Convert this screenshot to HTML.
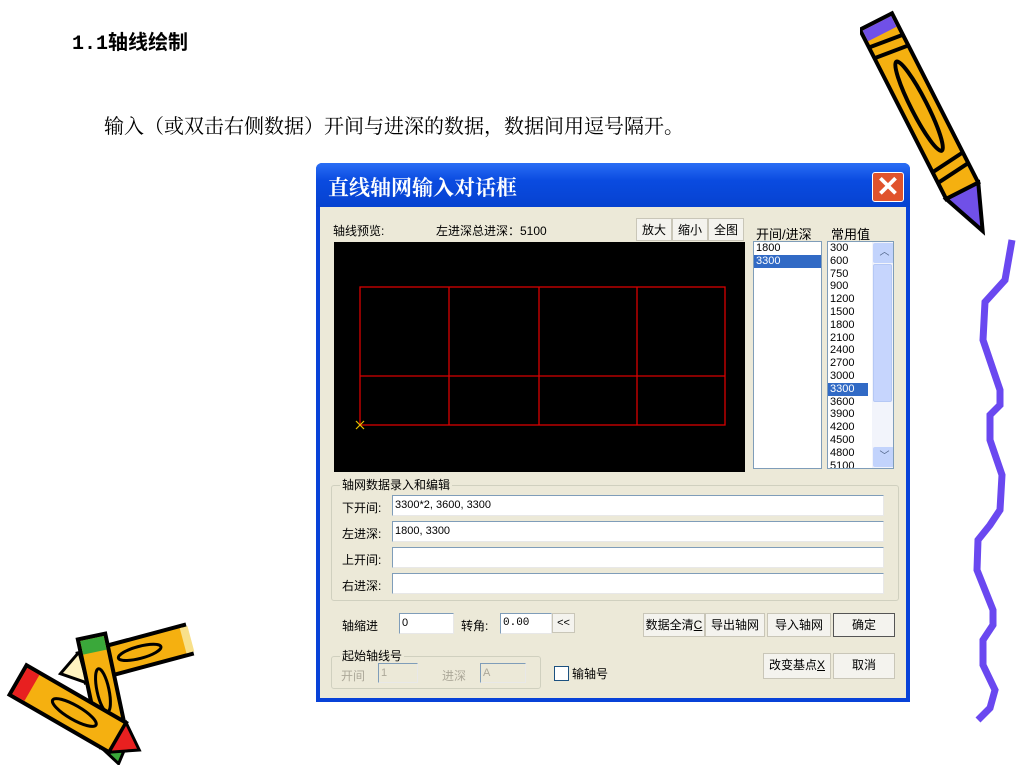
<!DOCTYPE html>
<html><head><meta charset="utf-8"><style>
body{margin:0;width:1024px;height:768px;background:#fff;position:relative;overflow:hidden;font-family:"Liberation Sans","Noto Sans CJK SC",sans-serif}
.a{position:absolute}
.t{font-size:12px;color:#000;white-space:nowrap}
.in{position:absolute;background:#fff;border-top:1px solid #7f9db9;border-left:1px solid #7f9db9;border-right:1px solid #e8e8e8;border-bottom:1px solid #e8e8e8;font-size:11px;line-height:19px;padding-left:2px;box-sizing:border-box}
.btn{position:absolute;background:#f4f3ee;border:1px solid #c9c6b8;font-size:12px;text-align:center;box-sizing:border-box;line-height:22px}
.lst div{font-size:11px;line-height:12.8px;padding-left:2px}
</style></head><body>
<div class="a" style="left:72px;top:26px;font-size:20px;font-weight:bold;font-family:'Liberation Mono','Noto Sans CJK SC',monospace">1.1<span style="font-family:'Noto Sans CJK SC',sans-serif">轴线绘制</span></div>
<div class="a" style="left:104px;top:110px;font-size:20px;font-family:'Noto Serif CJK SC',serif">输入（或双击右侧数据）开间与进深的数据，数据间用逗号隔开。</div>

<div class="a" style="left:316px;top:163px;width:594px;height:539px;background:#0842d8;border-radius:6px 6px 0 0"></div>
<div class="a" style="left:316px;top:163px;width:594px;height:44px;background:linear-gradient(#2a6ef5,#0a4be0 40%,#0642d0);border-radius:6px 6px 0 0"></div>
<div class="a" style="left:328px;top:172px;font-size:21px;color:#fff;font-weight:bold;font-family:'Noto Serif CJK SC',serif">直线轴网输入对话框</div>
<div class="a" style="left:872px;top:172px;width:32px;height:30px;background:#e0532d;border:1px solid #fff;border-radius:3px;box-sizing:border-box;color:#fff;font-size:28px;line-height:27px;text-align:center;font-weight:bold">✕</div>
<div class="a" style="left:320px;top:207px;width:586px;height:491px;background:#ece9d8"></div>

<div class="a t" style="left:333px;top:222px">轴线预览:</div>
<div class="a t" style="left:436px;top:222px">左进深总进深：5100</div>
<div class="btn" style="left:636px;top:218px;width:36px;height:23px">放大</div>
<div class="btn" style="left:672px;top:218px;width:36px;height:23px">缩小</div>
<div class="btn" style="left:708px;top:218px;width:36px;height:23px">全图</div>
<div class="a t" style="left:756px;top:224px;font-size:13px">开间/进深</div>
<div class="a t" style="left:831px;top:224px;font-size:13px">常用值</div>

<svg class="a" style="left:334px;top:242px" width="411" height="230">
<rect width="411" height="230" fill="#000"/>
<g stroke="#d80000" stroke-width="1.3" fill="none">
<rect x="26" y="45" width="365" height="138"/>
<line x1="115" y1="45" x2="115" y2="183"/><line x1="205" y1="45" x2="205" y2="183"/><line x1="303" y1="45" x2="303" y2="183"/>
<line x1="26" y1="134" x2="391" y2="134"/></g>
<g stroke="#e8c000" stroke-width="1.2"><line x1="22" y1="179" x2="30" y2="187"/><line x1="30" y1="179" x2="22" y2="187"/></g>
</svg>

<div class="a lst" style="left:753px;top:241px;width:69px;height:228px;background:#fff;border:1px solid #7f9db9;box-sizing:border-box">
<div>1800</div><div style="background:#316ac5;color:#fff">3300</div></div>
<div class="a lst" style="left:827px;top:241px;width:67px;height:228px;background:#fff;border:1px solid #7f9db9;box-sizing:border-box;overflow:hidden">
<div>300</div><div>600</div><div>750</div><div>900</div><div>1200</div><div>1500</div><div>1800</div><div>2100</div><div>2400</div><div>2700</div><div>3000</div><div style="background:#316ac5;color:#fff;width:38px">3300</div><div>3600</div><div>3900</div><div>4200</div><div>4500</div><div>4800</div><div>5100</div>
<div class="a" style="left:44px;top:0;width:21px;height:226px;background:#f2f4fb"></div>
<div class="a" style="left:45px;top:1px;width:19px;height:20px;background:#c2d3fc;border-radius:2px;color:#4d6185;font-size:10px;text-align:center;line-height:20px">︿</div>
<div class="a" style="left:45px;top:22px;width:19px;height:138px;background:#c6d5fd;border-radius:2px;border:1px solid #b5c8f5;box-sizing:border-box"></div>
<div class="a" style="left:45px;top:205px;width:19px;height:20px;background:#c2d3fc;border-radius:2px;color:#4d6185;font-size:10px;text-align:center;line-height:20px">﹀</div>
</div>

<div class="a" style="left:331px;top:485px;width:566px;height:114px;border:1px solid #d0d0bf;border-radius:3px"></div>
<div class="a t" style="left:340px;top:476px;background:#ece9d8;padding:0 2px">轴网数据录入和编辑</div>
<div class="a t" style="left:342px;top:499px">下开间:</div>
<div class="a t" style="left:342px;top:525px">左进深:</div>
<div class="a t" style="left:342px;top:551px">上开间:</div>
<div class="a t" style="left:342px;top:577px">右进深:</div>
<div class="in" style="left:392px;top:495px;width:492px;height:21px">3300*2, 3600, 3300</div>
<div class="in" style="left:392px;top:521px;width:492px;height:21px">1800, 3300</div>
<div class="in" style="left:392px;top:547px;width:492px;height:21px"></div>
<div class="in" style="left:392px;top:573px;width:492px;height:21px"></div>

<div class="a t" style="left:342px;top:617px">轴缩进</div>
<div class="in" style="left:399px;top:613px;width:55px;height:21px">0</div>
<div class="a t" style="left:461px;top:617px">转角:</div>
<div class="in" style="left:500px;top:613px;width:52px;height:21px;font-family:'Liberation Mono',monospace">0.00</div>
<div class="btn" style="left:552px;top:613px;width:23px;height:20px;line-height:18px;font-size:11px">&lt;&lt;</div>
<div class="btn" style="left:643px;top:613px;width:62px;height:24px">数据全清<u>C</u></div>
<div class="btn" style="left:705px;top:613px;width:60px;height:24px">导出轴网</div>
<div class="btn" style="left:767px;top:613px;width:64px;height:24px">导入轴网</div>
<div class="btn" style="left:833px;top:613px;width:62px;height:24px;border:1px solid #555">确定</div>
<div class="btn" style="left:763px;top:653px;width:68px;height:26px">改变基点<u>X</u></div>
<div class="btn" style="left:833px;top:653px;width:62px;height:26px">取消</div>

<div class="a" style="left:331px;top:656px;width:208px;height:31px;border:1px solid #d0d0bf;border-radius:3px"></div>
<div class="a t" style="left:340px;top:647px;background:#ece9d8;padding:0 2px">起始轴线号</div>
<div class="a t" style="left:341px;top:667px;color:#aca899">开间</div>
<div class="in" style="left:378px;top:663px;width:40px;height:20px;background:#ece9d8;color:#aca899">1</div>
<div class="a t" style="left:442px;top:667px;color:#aca899">进深</div>
<div class="in" style="left:480px;top:663px;width:46px;height:20px;background:#ece9d8;color:#aca899">A</div>
<div class="a" style="left:554px;top:666px;width:13px;height:13px;background:#fff;border:1px solid #1c5180"></div>
<div class="a t" style="left:572px;top:665px">输轴号</div>

<svg class="a" style="left:860px;top:0" width="150" height="245">
<g transform="rotate(-27 65 120)">
<rect x="48" y="10" width="36" height="190" fill="#f5b010" stroke="#000" stroke-width="4"/>
<rect x="50" y="12" width="32" height="12" fill="#7050e8"/>
<path d="M48 30 L84 34 M48 42 L84 46 M48 170 L84 166 M48 182 L84 178" stroke="#000" stroke-width="4"/>
<ellipse cx="66" cy="105" rx="8" ry="50" fill="none" stroke="#000" stroke-width="4"/>
<path d="M48 200 L66 245 L84 200 Z" fill="#7050e8" stroke="#000" stroke-width="4"/>
</g></svg>

<svg class="a" style="left:0;top:0" width="1024" height="768">
<path d="M1012 240 L1005 280 L985 302 L983 340 L1000 390 L1000 405 L990 415 L990 440 L1002 475 L1000 510 L990 525 L978 540 L977 570 L993 610 L993 625 L983 640 L983 665 L995 690 L990 708 L978 720" fill="none" stroke="#6a48f0" stroke-width="7"/>
</svg>

<svg class="a" style="left:0;top:615px" width="210" height="150">
<g transform="rotate(-15 130 40)">
<rect x="80" y="25" width="110" height="30" fill="#f5b010" stroke="#000" stroke-width="4"/>
<path d="M80 25 L58 40 L80 55" fill="#fff3c0" stroke="#000" stroke-width="3"/>
<rect x="185" y="27" width="8" height="26" fill="#f8e08a"/>
<ellipse cx="140" cy="40" rx="22" ry="6" fill="none" stroke="#000" stroke-width="3"/></g>
<g transform="rotate(-12 105 80)">
<rect x="90" y="20" width="28" height="110" fill="#f5b010" stroke="#000" stroke-width="4"/>
<rect x="92" y="22" width="24" height="14" fill="#3aa83a"/>
<path d="M90 130 L104 150 L118 130Z" fill="#3aa83a" stroke="#000" stroke-width="3"/>
<ellipse cx="104" cy="75" rx="6" ry="22" fill="none" stroke="#000" stroke-width="3"/></g>
<g transform="rotate(30 70 95)">
<rect x="10" y="78" width="115" height="34" fill="#f5b010" stroke="#000" stroke-width="4"/>
<rect x="12" y="80" width="14" height="30" fill="#e82020"/>
<path d="M125 78 L150 95 L125 112Z" fill="#e82020" stroke="#000" stroke-width="3"/>
<ellipse cx="75" cy="95" rx="25" ry="7" fill="none" stroke="#000" stroke-width="3"/></g>
</svg>
</body></html>
